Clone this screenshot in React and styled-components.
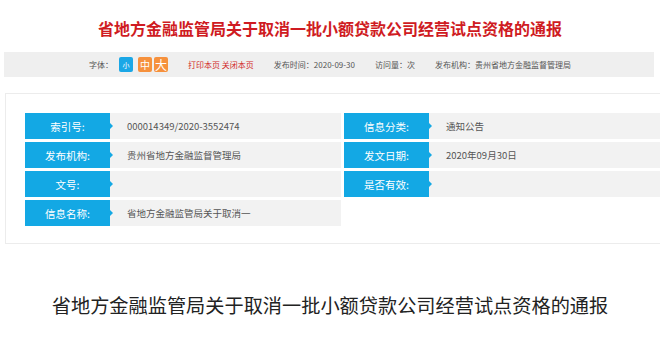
import React from "react";
import styled, { createGlobalStyle } from "styled-components";

const GlobalStyle = createGlobalStyle`
  html, body {
    margin: 0;
    padding: 0;
    background: #fff;
    overflow-x: hidden;
  }
  body {
    font-family: "Noto Sans CJK SC", "Liberation Sans", sans-serif;
  }
`;

const Page = styled.div`
  width: 660px;
`;

const Title = styled.h1`
  margin: 0;
  padding-top: 18px;
  font-size: 16px;
  line-height: 20px;
  font-weight: bold;
  color: #cf1b22;
  text-align: center;
`;

const InfoBar = styled.div`
  margin: 14px 6px 0 4px;
  height: 25px;
  background: #efefef;
  display: flex;
  align-items: center;
  justify-content: center;
  font-size: 8px;
  color: #555;
  padding-left: 22px;
`;

const Group = styled.span`
  display: flex;
  align-items: center;
  margin-right: ${(p) => p.$gap || 20}px;
  color: ${(p) => p.$color || "#555"};
`;

const SizeBtn = styled.span`
  width: 14px;
  height: 15px;
  margin-left: ${(p) => p.$ml || 0}px;
  border-radius: 2px;
  background: ${(p) => (p.$active ? "#1ba7e6" : "#f6913d")};
  color: #fff;
  font-size: ${(p) => p.$size}px;
  display: flex;
  align-items: center;
  justify-content: center;
`;

const Card = styled.div`
  margin: 16px -8px 0 5px;
  border: 1px solid #ececec;
  padding: 19px 0 17px 19px;
  display: grid;
  grid-template-columns: 316px 316px;
  column-gap: 3px;
  row-gap: 3px;
`;

const Row = styled.div`
  display: flex;
  height: 26px;
`;

const Label = styled.div`
  position: relative;
  width: 85px;
  flex-shrink: 0;
  background: #13a8e4;
  color: #fff;
  font-size: 10.5px;
  display: flex;
  align-items: center;
  justify-content: center;
  &::after {
    content: "";
    position: absolute;
    right: -3px;
    top: 50%;
    margin-top: -3px;
    border-left: 3px solid #13a8e4;
    border-top: 3px solid transparent;
    border-bottom: 3px solid transparent;
  }
`;

const Value = styled.div`
  flex: 1;
  background: #f2f2f2;
  color: #555;
  font-size: 9.5px;
  display: flex;
  align-items: center;
  padding-left: 17px;
`;

const BodyTitle = styled.h2`
  margin: 51px 0 0;
  font-family: "Liberation Serif", "Noto Sans CJK SC", serif;
  font-weight: normal;
  font-size: 19.2px;
  line-height: 24px;
  color: #222;
  text-align: center;
`;

const rows = [
  ["索引号:", "000014349/2020-3552474"],
  ["信息分类:", "通知公告"],
  ["发布机构:", "贵州省地方金融监督管理局"],
  ["发文日期:", "2020年09月30日"],
  ["文号:", ""],
  ["是否有效:", ""],
  ["信息名称:", "省地方金融监管局关于取消一"],
];

export default function App() {
  return (
    <Page>
      <GlobalStyle />
      <Title>省地方金融监管局关于取消一批小额贷款公司经营试点资格的通报</Title>
      <InfoBar>
        <Group $gap={20}>
          字体：
          <SizeBtn $active $size={7} $ml={6}>小</SizeBtn>
          <SizeBtn $size={10} $ml={5}>中</SizeBtn>
          <SizeBtn $size={12} $ml={2}>大</SizeBtn>
        </Group>
        <Group $gap={20} $color="#d22a2a">打印本页 关闭本页</Group>
        <Group $gap={20}>发布时间：2020-09-30</Group>
        <Group $gap={20}>访问量：次</Group>
        <Group $gap={0}>发布机构：贵州省地方金融监督管理局</Group>
      </InfoBar>
      <Card>
        {rows.map(([label, value]) => (
          <Row key={label}>
            <Label>{label}</Label>
            <Value>{value}</Value>
          </Row>
        ))}
      </Card>
      <BodyTitle>省地方金融监管局关于取消一批小额贷款公司经营试点资格的通报</BodyTitle>
    </Page>
  );
}
